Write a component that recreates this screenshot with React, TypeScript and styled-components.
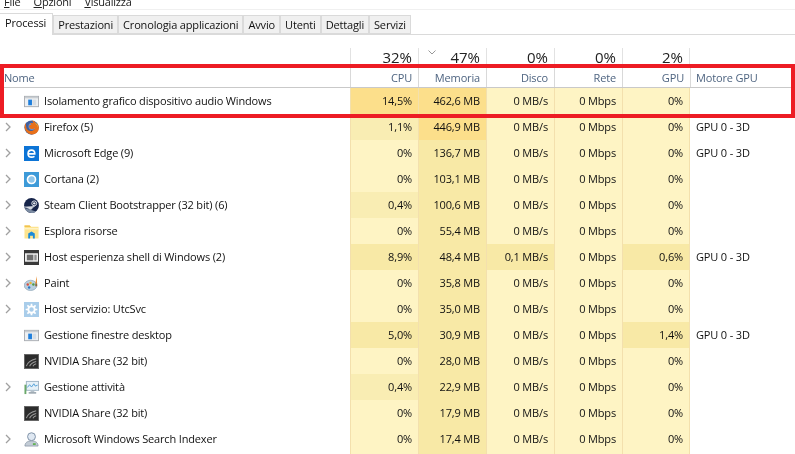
import React from "react"
import styled, {createGlobalStyle} from "styled-components"

const GlobalStyle = createGlobalStyle`
  html, body {
    margin: 0;
    padding: 0;
    background: #fff;
    overflow: hidden;
  }
`

const COLUMNS = "350px repeat(5, 68px) 1fr"
const FONT = `"Open Sans", "Noto Sans", "Liberation Sans", sans-serif`

const heat = ["#fef4c4", "#f9edb3", "#f8e9a6", "#fcdf8b"]

type IconName = "window" | "firefox" | "edge" | "cortana" | "steam" | "explorer" | "shell" | "paint" | "gear" | "nvidia" | "taskmgr" | "search"

type RowData = {
  name: string
  icon: IconName
  expand: boolean
  cells: [string, string, string, string, string]
  levels: [number, number, number, number, number]
  engine?: string
}

const rows: RowData[] = [
  {name: "Isolamento grafico dispositivo audio Windows", icon: "window", expand: false, cells: ["14,5%", "462,6 MB", "0 MB/s", "0 Mbps", "0%"], levels: [3, 3, 0, 0, 0]},
  {name: "Firefox (5)", icon: "firefox", expand: true, cells: ["1,1%", "446,9 MB", "0 MB/s", "0 Mbps", "0%"], levels: [1, 3, 0, 0, 0], engine: "GPU 0 - 3D"},
  {name: "Microsoft Edge (9)", icon: "edge", expand: true, cells: ["0%", "136,7 MB", "0 MB/s", "0 Mbps", "0%"], levels: [0, 2, 0, 0, 0], engine: "GPU 0 - 3D"},
  {name: "Cortana (2)", icon: "cortana", expand: true, cells: ["0%", "103,1 MB", "0 MB/s", "0 Mbps", "0%"], levels: [0, 2, 0, 0, 0]},
  {name: "Steam Client Bootstrapper (32 bit) (6)", icon: "steam", expand: true, cells: ["0,4%", "100,6 MB", "0 MB/s", "0 Mbps", "0%"], levels: [1, 2, 0, 0, 0]},
  {name: "Esplora risorse", icon: "explorer", expand: true, cells: ["0%", "55,4 MB", "0 MB/s", "0 Mbps", "0%"], levels: [0, 2, 0, 0, 0]},
  {name: "Host esperienza shell di Windows (2)", icon: "shell", expand: true, cells: ["8,9%", "48,4 MB", "0,1 MB/s", "0 Mbps", "0,6%"], levels: [2, 2, 2, 0, 2], engine: "GPU 0 - 3D"},
  {name: "Paint", icon: "paint", expand: true, cells: ["0%", "35,8 MB", "0 MB/s", "0 Mbps", "0%"], levels: [0, 2, 0, 0, 0]},
  {name: "Host servizio: UtcSvc", icon: "gear", expand: true, cells: ["0%", "35,0 MB", "0 MB/s", "0 Mbps", "0%"], levels: [0, 2, 0, 0, 0]},
  {name: "Gestione finestre desktop", icon: "window", expand: false, cells: ["5,0%", "30,9 MB", "0 MB/s", "0 Mbps", "1,4%"], levels: [2, 2, 0, 0, 2], engine: "GPU 0 - 3D"},
  {name: "NVIDIA Share (32 bit)", icon: "nvidia", expand: false, cells: ["0%", "28,0 MB", "0 MB/s", "0 Mbps", "0%"], levels: [0, 2, 0, 0, 0]},
  {name: "Gestione attività", icon: "taskmgr", expand: true, cells: ["0,4%", "22,9 MB", "0 MB/s", "0 Mbps", "0%"], levels: [1, 2, 0, 0, 0]},
  {name: "NVIDIA Share (32 bit)", icon: "nvidia", expand: false, cells: ["0%", "17,9 MB", "0 MB/s", "0 Mbps", "0%"], levels: [0, 2, 0, 0, 0]},
  {name: "Microsoft Windows Search Indexer", icon: "search", expand: true, cells: ["0%", "17,4 MB", "0 MB/s", "0 Mbps", "0%"], levels: [0, 2, 0, 0, 0]},
]

const tabs = ["Processi", "Prestazioni", "Cronologia applicazioni", "Avvio", "Utenti", "Dettagli", "Servizi"]

const totals = [
  {label: "CPU", value: "32%"},
  {label: "Memoria", value: "47%", sorted: true},
  {label: "Disco", value: "0%"},
  {label: "Rete", value: "0%"},
  {label: "GPU", value: "2%"},
]

function AppIcon({name}: {name: IconName}) {
  switch (name) {
    case "window":
      return <IconSvg viewBox="0 0 16 16">
        <rect x=".5" y="2.5" width="15" height="11" fill="#eef0f2" stroke="#a9adb2" />
        <rect x="1" y="3" width="14" height="1.6" fill="#c9cdd1" />
        <rect x="4.5" y="6" width="4" height="6" fill="#1f7fdc" />
        <rect x="9" y="6" width="4" height="6" fill="#d5dde5" />
      </IconSvg>
    case "firefox":
      return <IconSvg viewBox="0 0 16 16">
        <circle cx="8" cy="8" r="7.6" fill="#3f5f9e" />
        <circle cx="8.6" cy="6.8" r="3.800" fill="#7193cc" />
        <path d="M1.800 3C.4 5.600.1 9 2 11.800c2.200 3.300 6.200 4.300 9.400 3.100 3.200-1.200 4.800-4.300 4.400-7.400-.2-1.800-1-3.400-1.900-4.400.3 1.300.2 2.300-.2 3-.4-2.400-2.100-5-5.300-5.800 1 1.100 1.600 2.300 1.500 3.300-1-.6-2.400-.6-3.400-.1.700.3 1.200.8 1.300 1.300-.7.500-1.700.7-2.400 1.400-.3 1.700 1.100 3.400 3.200 3.500 1.500 0 2.700-.7 3.200-1.700-.1 2.100-2 3.900-4.500 3.800-2.800-.1-5-2.300-5-4.900 0-1.300-.7-2.500-.5-3.900z" fill="#e8701a" />
        <path d="M12 2.400c1.800 1.500 3.200 3.700 2.900 6.300-.3-2-1.400-3.500-2.500-4.700z" fill="#f8b62d" />
      </IconSvg>
    case "edge":
      return <IconSvg viewBox="0 0 16 16">
        <rect width="16" height="16" fill="#0c74d6" />
        <path d="M4.300 8.400h7.200c.2-2.500-1.300-4-3.400-4-2.200 0-3.800 1.600-3.800 3.800s1.600 3.700 3.900 3.700c1.100 0 2.100-.3 3-.9" fill="none" stroke="#fff" strokeWidth="1.700" />
      </IconSvg>
    case "cortana":
      return <IconSvg viewBox="0 0 16 16">
        <rect width="16" height="16" fill="#3d9ad8" />
        <circle cx="8" cy="8" r="4.300" fill="#8fc6ea" stroke="#fff" strokeWidth="1.700" />
      </IconSvg>
    case "steam":
      return <IconSvg viewBox="0 0 16 16">
        <circle cx="8" cy="8" r="7.900" fill="#16244a" />
        <path d="M.2 9.400 5 11.300a2.200 2.200 0 0 0 4-.9l2.700-2" fill="#d5dae2" stroke="#d5dae2" strokeWidth=".6" />
        <path d="M.8 11c1.200 2.900 4 5 7.200 5 1.800 0 3.500-.6 4.800-1.700L5 11.900z" fill="#7d8da3" />
        <circle cx="10.900" cy="5.700" r="2.600" fill="none" stroke="#e6eaf0" strokeWidth="1" />
        <circle cx="10.900" cy="5.700" r="1.300" fill="#e6eaf0" />
      </IconSvg>
    case "explorer":
      return <IconSvg viewBox="0 0 16 16">
        <path d="M.5 1.500h5.500L7.500 3h8v12.500H.5z" fill="#fde48f" />
        <path d="M.5 1.500h5.500L7.500 3H.5z" fill="#eeb838" />
        <rect x=".5" y="4.500" width="15" height="1.200" fill="#fff6d2" />
        <path d="M4.500 15.500V10L8 8l3.500 2v5.500H9.500v-3h-3v3z" fill="#1c8bd8" />
      </IconSvg>
    case "shell":
      return <IconSvg viewBox="0 0 16 16">
        <rect x=".5" y=".5" width="15" height="15" fill="#f4f4f4" stroke="#3a3a3a" strokeWidth="1.200" />
        <rect x="1" y="1" width="14" height="2.500" fill="#3a3a3a" />
        <rect x="1" y="12.500" width="14" height="2.500" fill="#3a3a3a" />
        <rect x="3" y="5" width="7" height="6" fill="#6d6d6d" />
        <rect x="11" y="5" width="2.500" height="6" fill="#8f8f8f" />
      </IconSvg>
    case "paint":
      return <IconSvg viewBox="0 0 16 16">
        <ellipse cx="7" cy="10" rx="6.800" ry="5.500" fill="#b9cfe0" stroke="#7f97ab" strokeWidth=".6" />
        <circle cx="4" cy="9" r="1.300" fill="#d9503f" />
        <circle cx="7" cy="7.500" r="1.300" fill="#e8b52f" />
        <circle cx="10" cy="9" r="1.300" fill="#4d9c4a" />
        <circle cx="5.500" cy="12.300" r="1.300" fill="#2d78c4" />
        <path d="M13.500 0 12 8h2z" fill="#e88a2a" />
        <rect x="12" y="8" width="2" height="3" fill="#8c6a3f" />
      </IconSvg>
    case "gear":
      return <IconSvg viewBox="0 0 16 16">
        <rect width="16" height="16" fill="#a9cdea" />
        <circle cx="8" cy="8" r="3.400" fill="none" stroke="#fff" strokeWidth="2" />
        <path d="M8 1.800v2.400M8 11.800v2.400M1.800 8h2.400M11.800 8h2.400M3.600 3.600l1.700 1.700M10.700 10.700l1.700 1.700M12.400 3.600l-1.700 1.700M5.300 10.700l-1.700 1.700" stroke="#fff" strokeWidth="1.800" />
      </IconSvg>
    case "nvidia":
      return <IconSvg viewBox="0 0 16 16">
        <rect width="16" height="16" fill="#2c2c2c" />
        <rect x=".5" y=".5" width="15" height="15" fill="none" stroke="#6b6b6b" />
        <path d="M2.500 13c1-3.500 4-6.500 10.500-8M6 13c.8-2 2.800-4 7-5M9.500 13c.6-1 1.800-2 3.500-2.500" fill="none" stroke="#9a9a9a" strokeWidth="1.100" />
      </IconSvg>
    case "taskmgr":
      return <IconSvg viewBox="0 0 16 16">
        <rect x="2.500" y="1.500" width="13" height="9.500" fill="#e6f1f8" stroke="#9fb4c4" />
        <path d="M3.500 8 6 5l2 2.500L10.500 4l1.500 2.500 2.500-1" fill="none" stroke="#4f9ed8" strokeWidth="1" />
        <rect x="7" y="11" width="4" height="2" fill="#b6c2cb" />
        <rect x="5" y="13" width="8" height="1.500" fill="#8e9ba5" />
        <rect x=".5" y="5" width="2" height="10" fill="#6aa86a" />
      </IconSvg>
    case "search":
      return <IconSvg viewBox="0 0 16 16">
        <circle cx="8" cy="5" r="4.200" fill="#dfe8f2" stroke="#7b8ea4" />
        <path d="M1 15c0-3.600 2.600-5.500 7-5.500s7 1.900 7 5.500z" fill="#c3ccd6" stroke="#8794a3" strokeWidth=".8" />
        <rect x="9.500" y="12" width="3" height="1.800" fill="#5bb04b" />
      </IconSvg>
  }
}

export default function App() {
  return <Page>
    <GlobalStyle />
    <MenuBar>
      <MenuItem><u>F</u>ile</MenuItem>
      <MenuItem><u>O</u>pzioni</MenuItem>
      <MenuItem><u>V</u>isualizza</MenuItem>
    </MenuBar>
    <TabStrip>
      {tabs.map((tab, i) => <Tab key={tab} $active={i === 0}>{tab}</Tab>)}
    </TabStrip>
    <Table>
      <TotalsRow>
        <span />
        {totals.map(t => <Total key={t.label}>
          {t.sorted && <SortMark viewBox="0 0 8 5"><path d="M.5.500 4 4l3.500-3.500" /></SortMark>}
          {t.value}
        </Total>)}
        <span />
      </TotalsRow>
      <HeaderRow>
        <NameHeader>Nome</NameHeader>
        {totals.map(t => <ColumnHeader key={t.label}>{t.label}</ColumnHeader>)}
        <EngineHeader>Motore GPU</EngineHeader>
      </HeaderRow>
      {rows.map((row, i) => <Row key={i}>
        <NameCell>
          <Expander>
            {row.expand && <svg viewBox="0 0 6 10" width="6" height="10"><path d="M1 1l4 4-4 4" fill="none" stroke="#a0a0a0" strokeWidth="1.300" /></svg>}
          </Expander>
          <AppIcon name={row.icon} />
          <NameText>{row.name}</NameText>
        </NameCell>
        {row.cells.map((value, c) => <Cell key={c} $level={row.levels[c]}>{value}</Cell>)}
        <EngineCell>{row.engine}</EngineCell>
      </Row>)}
      <Row>
        <span />
        {[0, 2, 0, 0, 0].map((level, c) => <Cell key={c} $level={level} />)}
        <span />
      </Row>
    </Table>
    <Highlight />
  </Page>
}

const Page = styled.div`
  position: relative;
  width: 795px;
  height: 454px;
  overflow: hidden;
  background: #fff;
  color: #111;
  font-family: ${FONT};
  font-size: 11px;
  letter-spacing: -.16px;
  filter: blur(.35px);
`

const MenuBar = styled.div`
  display: flex;
  align-items: flex-end;
  gap: 13px;
  height: 10px;
  padding: 0 4px;
  box-sizing: border-box;
  border-bottom: 1px solid #f0f0f0;
  overflow: hidden;
`

const MenuItem = styled.span`
  font-size: 11px;
  letter-spacing: -.22px;
  line-height: 16px;
  margin-bottom: -1px;
  color: #222;
`

const TabStrip = styled.div`
  display: flex;
  align-items: flex-end;
  height: 24px;
  border-bottom: 1px solid #dadada;
`

const Tab = styled.div<{$active: boolean}>`
  height: ${({$active}) => $active ? "22px" : "19px"};
  line-height: ${({$active}) => $active ? "18px" : "18px"};
  margin-bottom: ${({$active}) => $active ? "-1px" : "0"};
  padding: 0 ${({$active}) => $active ? "6px 0 5px" : "4px"};
  box-sizing: border-box;
  border: 1px solid #dadada;
  border-bottom: ${({$active}) => $active ? "none" : "1px solid #dadada"};
  border-left: ${({$active}) => $active ? "none" : "1px solid #dadada"};
  background: ${({$active}) => $active ? "#fff" : "#f0f0f0"};
  white-space: nowrap;
`

const Table = styled.div`
  margin-top: 13px;
`

const TotalsRow = styled.div`
  display: grid;
  grid-template-columns: ${COLUMNS};
  height: 20px;
`

const Total = styled.div`
  position: relative;
  border-left: 1px solid #e2e2e2;
  padding-right: 6px;
  text-align: right;
  font-size: 15px;
  letter-spacing: 0;
  line-height: 18px;
  color: #222;
  &:nth-child(6) {
    border-right: 1px solid #e2e2e2;
  }
`

const SortMark = styled.svg`
  position: absolute;
  left: 9px;
  top: 2px;
  width: 8px;
  height: 5px;
  fill: none;
  stroke: #8c8c8c;
  stroke-width: .9;
`

const HeaderRow = styled.div`
  display: grid;
  grid-template-columns: ${COLUMNS};
  height: 20px;
  line-height: 19px;
  box-sizing: border-box;
  border-bottom: 1px solid #c9c9c9;
  color: #4e6480;
`

const NameHeader = styled.div`
  padding-left: 4px;
`

const ColumnHeader = styled.div`
  border-left: 1px solid #d9d9d9;
  padding-right: 6px;
  text-align: right;
`

const EngineHeader = styled.div`
  border-left: 1px solid #d9d9d9;
  padding-left: 5px;
`

const Row = styled.div`
  display: grid;
  grid-template-columns: ${COLUMNS};
  height: 26px;
  line-height: 26px;
`

const NameCell = styled.div`
  display: flex;
  align-items: center;
  padding-left: 5px;
`

const Expander = styled.span`
  display: flex;
  width: 19px;
`

const IconSvg = styled.svg`
  flex: none;
  width: 15px;
  height: 15px;
  margin-right: 5px;
`

const NameText = styled.span`
  white-space: nowrap;
`

const Cell = styled.div<{$level: number}>`
  background: ${({$level}) => heat[$level]};
  border-left: 1px solid #f3e0ad;
  padding-right: 6px;
  text-align: right;
  white-space: nowrap;
  &:nth-child(6) {
    border-right: 1px solid #f3e0ad;
  }
`

const EngineCell = styled.div`
  padding-left: 6px;
`

const Highlight = styled.div`
  position: absolute;
  left: 0;
  right: 0;
  top: 64px;
  height: 54px;
  box-sizing: border-box;
  border: 4px solid #ed1c24;
  pointer-events: none;
`
